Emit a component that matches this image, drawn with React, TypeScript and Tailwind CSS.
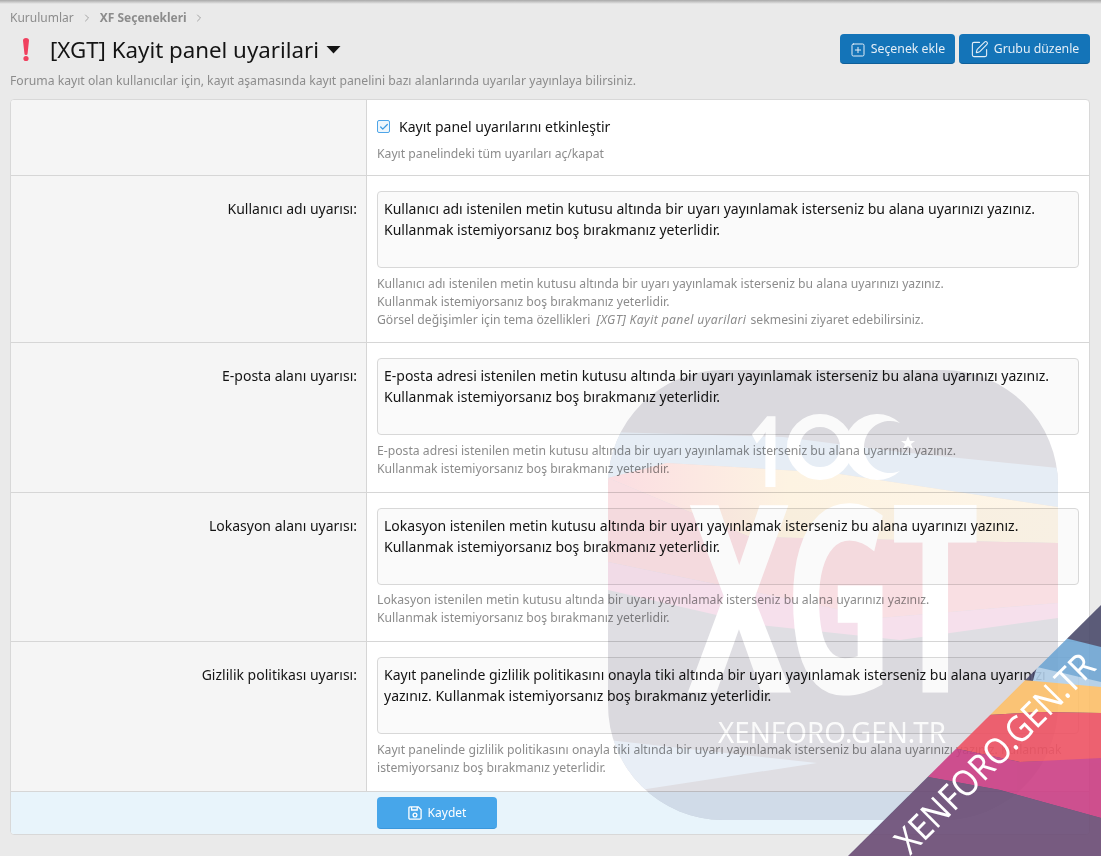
import { ChevronRight, SquarePen, SquarePlus, Check } from 'lucide-react';

const font = { fontFamily: '"Noto Sans", "Open Sans", sans-serif' };

interface OptionRowProps {
  label: string;
  value: string;
  children: React.ReactNode;
}

function OptionRow({ label, value, children }: OptionRowProps) {
  return (
    <div className="flex border-b border-[#d6d6d6]">
      <div className="w-[356px] shrink-0 border-r border-[#d6d6d6] bg-[#f5f5f5] pr-[9px] pt-[22px] text-right text-[14px] leading-[21px] text-[#141414]">
        {label}
      </div>
      <div className="flex-1 px-[10px] pb-[13.9px] pt-[15px]">
        <textarea
          readOnly
          defaultValue={value}
          className="block h-[77px] w-full resize-none overflow-hidden rounded-[4px] border border-[#d8d8d8] bg-[#fafafa] px-[6px] py-[6px] text-[14px] leading-[21px] text-[#141414] outline-none"
        />
        <div className="mt-[6.5px] text-[12.2px] leading-[18px] text-[#8c8c8c]">{children}</div>
      </div>
    </div>
  );
}

function SaveIcon() {
  return (
    <svg width="14" height="14" viewBox="0 0 14 14" fill="none" stroke="currentColor" strokeWidth="1.3">
      <path d="M2 .9h8.3l2.8 2.8V12a1.1 1.1 0 0 1-1.1 1.1H2A1.1 1.1 0 0 1 .9 12V2A1.1 1.1 0 0 1 2 .9z" />
      <path d="M3.6 1v3h5.6V1" />
      <circle cx="7" cy="9" r="1.9" />
    </svg>
  );
}

// multiplied over the page so the form text stays dark through the badge
function Badge() {
  return (
    <svg className="pointer-events-none absolute inset-0 mix-blend-multiply" width="1101" height="856" viewBox="0 0 1101 856">
      <defs>
        <clipPath id="badge">
          <rect x="608" y="370" width="450" height="450" rx="115" />
        </clipPath>
        <linearGradient id="fadeLeft" x1="0" x2="1" y1="0" y2="0">
          <stop offset="0" stopColor="#fbdde2" />
          <stop offset="0.4" stopColor="#fdf3e2" />
          <stop offset="1" stopColor="#fdf5e8" />
        </linearGradient>
      </defs>

      <g clipPath="url(#badge)">
        <rect x="608" y="370" width="450" height="450" fill="#dfdee3" />
        <polygon points="608,432 783,437 900,452 1058,468 1058,507 833,473 667,463 608,478" fill="#e6edf5" />
        <polygon points="608,478 667,463 833,473 1058,507 1058,543 750,537" fill="url(#fadeLeft)" />
        <polygon points="608,478 750,537 1058,543 1058,603 880,618 608,562" fill="#f9dfe3" />
        <polygon points="608,562 880,618 1058,603 1058,618 900,640 760,625 608,590" fill="#f6e0ec" />
        <polygon points="608,740 817,763 640,790 608,790" fill="#e8eef6" />
        <rect x="608" y="792" width="450" height="28" fill="#e5e5ec" />
      </g>

      <g fill="#ffffff" style={font}>
        <text x="748" y="487" fontSize="98" fontWeight="700" textLength="38" lengthAdjust="spacingAndGlyphs">
          1
        </text>
        <circle cx="820" cy="447" r="26.5" fill="none" stroke="#ffffff" strokeWidth="13" />
        <path d="M900 423A33 33 0 1 0 900 471A26 26 0 1 1 900 423z" />
        <polygon points="908,436 910,441 915,441 911,444 913,449 908,446 903,449 905,444 901,441 906,441" />
        <text x="690" y="690" fontSize="256" fontWeight="700" stroke="#ffffff" strokeWidth="5" textLength="288" lengthAdjust="spacingAndGlyphs">
          XGT
        </text>
        <text x="718" y="743" fontSize="29" textLength="228" lengthAdjust="spacingAndGlyphs">
          XENFORO.GEN.TR
        </text>
      </g>
    </svg>
  );
}

function CornerRibbon() {
  return (
    <svg className="pointer-events-none absolute inset-0" width="1101" height="856" viewBox="0 0 1101 856">
      <defs>
        <clipPath id="corner">
          <polygon points="1101,605 848,856 1101,856" />
        </clipPath>
      </defs>
      <g clipPath="url(#corner)" opacity="0.9">
        <rect x="848" y="605" width="253" height="251" fill="#4c4c6c" />
        <polygon points="1065,638 1101,647 1101,690 1037,690 1037,667" fill="#6fa6d3" />
        <polygon points="1037,667 1101,682 1101,690 1030,690" fill="#b2cfe8" />
        <polygon points="1023,680 1101,687 1101,713 1040,712 988,715" fill="#fdc06a" />
        <polygon points="988,715 1040,712 1101,713 1101,760 1020,762 953,748" fill="#ee5363" />
        <polygon points="953,748 1020,762 1101,758 1101,818 1000,790 928,777" fill="#cb3f84" />
        <polygon points="928,777 1000,790 1101,818 1101,856 848,856" fill="#6b4c75" />
      </g>
      <text
        x="0"
        y="0"
        transform="translate(910,856) rotate(-45)"
        fill="#ffffff"
        fontSize="36"
        textLength="265"
        lengthAdjust="spacingAndGlyphs"
        style={font}
      >
        XENFORO.GEN.TR
      </text>
    </svg>
  );
}

export default function App() {
  return (
    <div className="relative h-[856px] w-[1101px] overflow-hidden bg-[#eaeaea]" style={font}>
      <div className="h-[4px] bg-gradient-to-b from-[#a8a8a8] to-[#eaeaea]" />
      <div className="pl-[10px] pr-[11px]">
        <div className="mt-[5px] flex h-[18px] items-center text-[12px] text-[#8c8c8c]">
          <span>Kurulumlar</span>
          <ChevronRight size={12} strokeWidth={1.5} className="mx-[7px]" />
          <span className="font-bold">XF Seçenekleri</span>
          <ChevronRight size={12} strokeWidth={1.5} className="mx-[6px]" />
        </div>

        <div className="mt-[6px] flex h-[38px] items-start justify-between">
          <div className="flex items-center pt-[2px] text-[#141414]">
            <svg width="8" height="24" viewBox="0 0 8 24" className="ml-[12px] mr-[20px]">
              <path d="M1 2.5a3 2.5 0 0 1 6 0L5.6 15.5a1.6 1.6 0 0 1-3.2 0z" fill="#f0415f" />
              <circle cx="4" cy="20.5" r="2.6" fill="#f0415f" />
            </svg>
            <h1 className="text-[22.3px] leading-[30px]">[XGT] Kayit panel uyarilari</h1>
            <svg width="15" height="8" viewBox="0 0 15 8" className="ml-[7px]">
              <path d="M.5 0h14L7.5 7.5z" fill="#141414" />
            </svg>
          </div>
          <div className="flex gap-[4px] pt-[1px]">
            <button className="flex h-[30px] w-[115px] items-center justify-center gap-[5px] rounded-[4px] border-b border-[#0f5f99] bg-[#1474b8] pt-[2px] text-[12.3px] text-[#e4eef7]">
              <SquarePlus size={16} strokeWidth={1.5} />
              Seçenek ekle
            </button>
            <button className="flex h-[30px] w-[131px] items-center justify-center gap-[5px] rounded-[4px] border-b border-[#0f5f99] bg-[#1474b8] pt-[2px] text-[12.3px] text-[#e4eef7]">
              <SquarePen size={19} strokeWidth={1.4} />
              Grubu düzenle
            </button>
          </div>
        </div>

        <p className="mt-[1px] text-[12.2px] leading-[18px] text-[#8c8c8c]">
          Foruma kayıt olan kullanıcılar için, kayıt aşamasında kayıt panelini bazı alanlarında uyarılar yayınlaya bilirsiniz.
        </p>

        <div className="mt-[9px] overflow-hidden rounded-[4px] border border-[#d8d8d8] bg-white">
          <div className="flex h-[76px] border-b border-[#d6d6d6]">
            <div className="w-[356px] shrink-0 border-r border-[#d6d6d6] bg-[#f5f5f5]" />
            <div className="flex-1 px-[10px] pt-[16px]">
              <label className="flex items-center text-[14px] leading-[21px] text-[#141414]">
                <span className="mr-[9px] flex h-[13px] w-[13px] items-center justify-center rounded-[2px] border border-[#4ea5e8] bg-[#eef6fc] text-[#3d9ae2]">
                  <Check size={10} strokeWidth={3} />
                </span>
                Kayıt panel uyarılarını etkinleştir
              </label>
              <div className="mt-[8px] text-[12.2px] leading-[18px] text-[#8c8c8c]">Kayıt panelindeki tüm uyarıları aç/kapat</div>
            </div>
          </div>

          <OptionRow
            label="Kullanıcı adı uyarısı:"
            value={'Kullanıcı adı istenilen metin kutusu altında bir uyarı yayınlamak isterseniz bu alana uyarınızı yazınız.\nKullanmak istemiyorsanız boş bırakmanız yeterlidir.'}
          >
            Kullanıcı adı istenilen metin kutusu altında bir uyarı yayınlamak isterseniz bu alana uyarınızı yazınız.
            <br />
            Kullanmak istemiyorsanız boş bırakmanız yeterlidir.
            <br />
            Görsel değişimler için tema özellikleri <i className="ml-[3px] mr-[1px] tracking-[0.37px]">[XGT] Kayit panel uyarilari</i> sekmesini ziyaret edebilirsiniz.
          </OptionRow>
          <OptionRow
            label="E-posta alanı uyarısı:"
            value={'E-posta adresi istenilen metin kutusu altında bir uyarı yayınlamak isterseniz bu alana uyarınızı yazınız.\nKullanmak istemiyorsanız boş bırakmanız yeterlidir.'}
          >
            E-posta adresi istenilen metin kutusu altında bir uyarı yayınlamak isterseniz bu alana uyarınızı yazınız.
            <br />
            Kullanmak istemiyorsanız boş bırakmanız yeterlidir.
          </OptionRow>
          <OptionRow
            label="Lokasyon alanı uyarısı:"
            value={'Lokasyon istenilen metin kutusu altında bir uyarı yayınlamak isterseniz bu alana uyarınızı yazınız.\nKullanmak istemiyorsanız boş bırakmanız yeterlidir.'}
          >
            Lokasyon istenilen metin kutusu altında bir uyarı yayınlamak isterseniz bu alana uyarınızı yazınız.
            <br />
            Kullanmak istemiyorsanız boş bırakmanız yeterlidir.
          </OptionRow>
          <OptionRow
            label="Gizlilik politikası uyarısı:"
            value={'Kayıt panelinde gizlilik politikasını onayla tiki altında bir uyarı yayınlamak isterseniz bu alana uyarınızı\nyazınız. Kullanmak istemiyorsanız boş bırakmanız yeterlidir.'}
          >
            Kayıt panelinde gizlilik politikasını onayla tiki altında bir uyarı yayınlamak isterseniz bu alana uyarınızı yazınız. Kullanmak
            <br />
            istemiyorsanız boş bırakmanız yeterlidir.
          </OptionRow>

          <div className="flex h-[42px] items-center bg-[#e8f4fb] pl-[366px]">
            <button className="flex h-[32px] w-[120px] items-center justify-center gap-[6px] rounded-[4px] border-b border-[#3a97dc] bg-[#47a6ea] pt-[1px] text-[12px] text-white">
              <SaveIcon />
              Kaydet
            </button>
          </div>
        </div>
      </div>
      <Badge />
      <CornerRibbon />
    </div>
  );
}
